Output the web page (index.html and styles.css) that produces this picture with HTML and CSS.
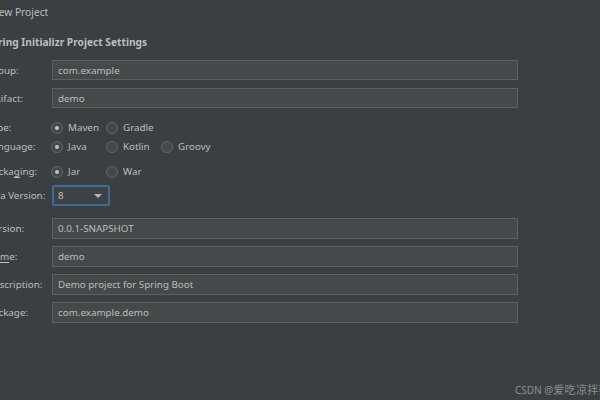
FILE: index.html
```html
<!DOCTYPE html>
<html>
<head>
<meta charset="utf-8">
<link rel="stylesheet" href="styles.css">
</head>
<body>
<div class="window">
  <div class="titlebar">New Project</div>
  <div class="content">
    <div class="heading">Spring Initializr Project Settings</div>
    <div class="form">
      <div class="row r-group"><span class="label">Group:</span><div class="field">com.example</div></div>
      <div class="row r-artifact"><span class="label">Artifact:</span><div class="field">demo</div></div>
      <div class="row r-type"><span class="label">Type:</span>
        <div class="radios">
          <span class="opt"><span class="radio on"></span>Maven</span>
          <span class="opt"><span class="radio"></span>Gradle</span>
        </div>
      </div>
      <div class="row r-lang"><span class="label">Language:</span>
        <div class="radios">
          <span class="opt"><span class="radio on"></span>Java</span>
          <span class="opt"><span class="radio"></span>Kotlin</span>
          <span class="opt"><span class="radio"></span>Groovy</span>
        </div>
      </div>
      <div class="row r-pack"><span class="label">Packa<u>g</u>ing:</span>
        <div class="radios">
          <span class="opt"><span class="radio on"></span>Jar</span>
          <span class="opt"><span class="radio"></span>War</span>
        </div>
      </div>
      <div class="row r-java"><span class="label">Java Version:</span>
        <div class="select"><span>8</span><span class="arrow"></span></div>
      </div>
      <div class="row r-version"><span class="label">Version:</span><div class="field">0.0.1-SNAPSHOT</div></div>
      <div class="row r-next"><span class="label">Na<u>m</u>e:</span><div class="field">demo</div></div>
      <div class="row r-next"><span class="label">Description:</span><div class="field">Demo project for Spring Boot</div></div>
      <div class="row r-next"><span class="label">Package:</span><div class="field">com.example.demo</div></div>
    </div>
  </div>
  <div class="watermark">CSDN @<span class="cjk">爱吃凉拌辣芒果</span></div>
</div>
</body>
</html>
```
FILE: styles.css
```css
html, body {
  margin: 0;
  padding: 0;
  width: 600px;
  height: 400px;
  overflow: hidden;
  background: #3c3f41;
}
.window {
  position: relative;
  width: 600px;
  height: 400px;
  font-family: "Noto Sans", "Noto Sans CJK SC", sans-serif;
  font-size: 9.8px;
  color: #bdbdbd;
}
.titlebar {
  height: 24px;
  line-height: 24px;
  margin-left: -9px;
  font-size: 10.2px;
}
.content {
  margin-left: -13px;
}
.heading {
  margin-top: 10px;
  margin-left: -1px;
  height: 16px;
  line-height: 16px;
  font-weight: bold;
  font-size: 10.2px;
}
.form {
  padding-top: 10px;
}
.row {
  display: flex;
  align-items: center;
  height: 21px;
}
.label {
  width: 65px;
  flex: none;
  white-space: nowrap;
}
.label u {
  text-decoration-thickness: 1px;
  text-underline-offset: 2px;
}
.r-group { height: 20px; }
.r-artifact { height: 20px; margin-top: 8px; }
.r-type { height: 19px; margin-top: 10px; }
.r-lang { height: 19px; }
.r-pack { height: 19px; margin-top: 6px; }
.r-java { margin-top: 4px; }
.r-version { margin-top: 12px; }
.r-next { margin-top: 7px; }
.field {
  box-sizing: border-box;
  width: 466px;
  height: 100%;
  background: #45494a;
  border: 1px solid #5e6163;
  padding-left: 5px;
  display: flex;
  align-items: center;
}
.radios {
  display: flex;
  margin-left: -1px;
}
.opt {
  width: 55px;
  display: flex;
  align-items: center;
  gap: 5px;
}
.radio {
  box-sizing: border-box;
  width: 12px;
  height: 12px;
  border-radius: 50%;
  border: 1px solid #636769;
  background: #43494a;
  display: flex;
  align-items: center;
  justify-content: center;
}
.radio.on::after {
  content: "";
  width: 4px;
  height: 4px;
  border-radius: 50%;
  background: #c4c4c4;
}
.select {
  box-sizing: border-box;
  width: 58px;
  height: 21px;
  border: 2px solid #3e6b98;
  border-radius: 2px;
  background: #3f4244;
  padding-left: 4px;
  padding-right: 6px;
  display: flex;
  align-items: center;
  justify-content: space-between;
}
.arrow {
  width: 0;
  height: 0;
  border-left: 4px solid transparent;
  border-right: 4px solid transparent;
  border-top: 4px solid #b8b8b8;
}
.watermark {
  position: absolute;
  left: 515px;
  top: 383px;
  font-size: 10px;
  line-height: 14px;
  color: #8d8f90;
  white-space: nowrap;
}
.watermark .cjk {
  font-size: 11px;
  letter-spacing: 0.3px;
}
```
